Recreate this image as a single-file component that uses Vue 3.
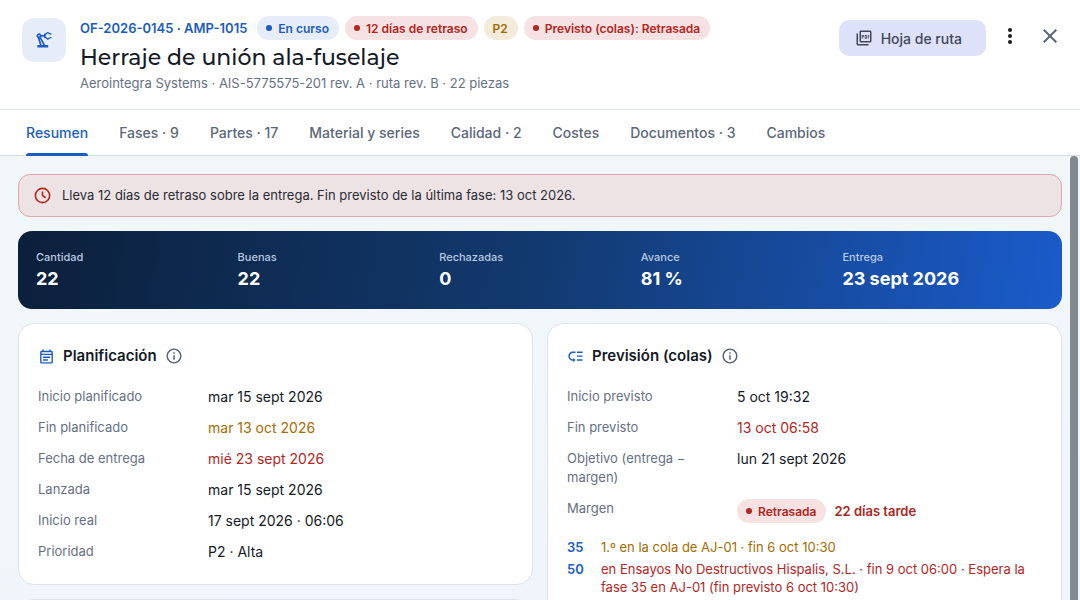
<script setup>
import { ref } from "vue";

const activeTab = ref("Resumen");

const tabs = [
  "Resumen",
  "Fases · 9",
  "Partes · 17",
  "Material y series",
  "Calidad · 2",
  "Costes",
  "Documentos · 3",
  "Cambios",
];

const chips = [
  { text: "En curso", tone: "info", dot: true },
  { text: "12 días de retraso", tone: "bad", dot: true },
  { text: "P2", tone: "warn", dot: false },
  { text: "Previsto (colas): Retrasada", tone: "bad", dot: true },
];

const stats = [
  { label: "Cantidad", value: "22" },
  { label: "Buenas", value: "22" },
  { label: "Rechazadas", value: "0" },
  { label: "Avance", value: "81 %" },
  { label: "Entrega", value: "23 sept 2026" },
];

const planning = [
  { label: "Inicio planificado", value: "mar 15 sept 2026" },
  { label: "Fin planificado", value: "mar 13 oct 2026", tone: "text-warn" },
  { label: "Fecha de entrega", value: "mié 23 sept 2026", tone: "text-bad" },
  { label: "Lanzada", value: "mar 15 sept 2026" },
  { label: "Inicio real", value: "17 sept 2026 · 06:06" },
  { label: "Prioridad", value: "P2 · Alta" },
];

const forecast = [
  { label: "Inicio previsto", value: "5 oct 19:32" },
  { label: "Fin previsto", value: "13 oct 06:58", tone: "text-bad" },
  { label: "Objetivo (entrega − margen)", value: "lun 21 sept 2026" },
];

const queue = [
  { phase: 35, text: "1.º en la cola de AJ-01 · fin 6 oct 10:30", tone: "text-warn" },
  {
    phase: 50,
    text: "en Ensayos No Destructivos Hispalis, S.L. · fin 9 oct 06:00 · Espera la fase 35 en AJ-01 (fin previsto 6 oct 10:30)",
    tone: "text-bad",
  },
];
</script>

<template>
  <div class="order">
    <header class="header">
      <div class="order-icon">
        <svg viewBox="0 0 24 24" width="20" height="20" fill="currentColor" aria-hidden="true">
          <path d="M19.93 8.35l-3.6 1.68L14 7.7V6.3l2.33-2.33 3.6 1.68c.38.18.82.01 1-.36.18-.38.01-.82-.36-1L16.65 2.46c-.38-.18-.83-.1-1.13.2l-1.74 1.74c-.18-.24-.46-.4-.78-.4-.55 0-1 .45-1 1v1H8.82C8.34 4.65 6.98 3.73 5.4 4.07c-1.16.25-2.15 1.25-2.36 2.43-.22 1.32.46 2.47 1.48 3.08L7.08 18H4v3h13v-3h-3.62L8.41 8.77c.17-.24.31-.49.41-.77H12v1c0 .55.45 1 1 1 .32 0 .6-.16.78-.38l1.74 1.74c.3.3.75.38 1.13.2l3.92-1.83c.38-.18.54-.62.36-1-.18-.37-.62-.54-1-.36zM6 8c-.55 0-1-.45-1-1s.45-1 1-1 1 .45 1 1-.45 1-1 1zm5.11 10H9.17l-2.46-8h.1l4.3 8z" />
        </svg>
      </div>
      <div class="heading">
        <div class="meta">
          <span class="code">OF-2026-0145 · AMP-1015</span>
          <span v-for="chip in chips" :key="chip.text" class="chip" :class="chip.tone">
            <span v-if="chip.dot" class="dot"></span>{{ chip.text }}
          </span>
        </div>
        <h1>Herraje de unión ala-fuselaje</h1>
        <p class="subtitle">Aerointegra Systems · AIS-5775575-201 rev. A · ruta rev. B · 22 piezas</p>
      </div>
      <div class="actions">
        <button type="button" class="route-button">
          <svg viewBox="0 0 24 24" width="18" height="18" fill="currentColor" aria-hidden="true">
            <path d="M20 2H8c-1.1 0-2 .9-2 2v12c0 1.1.9 2 2 2h12c1.1 0 2-.9 2-2V4c0-1.1-.9-2-2-2zm0 14H8V4h12v12zM4 6H2v14c0 1.1.9 2 2 2h14v-2H4V6zm12 6V9c0-.55-.45-1-1-1h-2v5h2c.55 0 1-.45 1-1zm-2-3h1v3h-1V9zm4 2h1v-1h-1V9h1V8h-2v5h1zm-8 0h1c.55 0 1-.45 1-1V9c0-.55-.45-1-1-1H9v5h1v-2zm0-2h1v1h-1V9z" />
          </svg>
          Hoja de ruta
        </button>
        <button type="button" class="icon-button dark" aria-label="Más acciones">
          <svg viewBox="0 0 24 24" width="24" height="24" fill="currentColor" aria-hidden="true">
            <circle cx="12" cy="6" r="2" />
            <circle cx="12" cy="12" r="2" />
            <circle cx="12" cy="18" r="2" />
          </svg>
        </button>
        <button type="button" class="icon-button" aria-label="Cerrar">
          <svg viewBox="0 0 24 24" width="24" height="24" fill="currentColor" aria-hidden="true">
            <path d="M19 6.41L17.59 5 12 10.59 6.41 5 5 6.41 10.59 12 5 17.59 6.41 19 12 13.41 17.59 19 19 17.59 13.41 12z" />
          </svg>
        </button>
      </div>
    </header>

    <nav class="tabs" role="tablist">
      <button
        v-for="tab in tabs"
        :key="tab"
        type="button"
        role="tab"
        class="tab"
        :class="{ active: tab === activeTab }"
        :aria-selected="tab === activeTab"
        @click="activeTab = tab"
      >
        {{ tab }}
      </button>
    </nav>

    <div class="body">
      <main class="content">
        <div class="alert" role="alert">
          <svg viewBox="0 0 24 24" width="19" height="19" fill="none" stroke="currentColor" stroke-width="2" aria-hidden="true">
            <circle cx="12" cy="12" r="9" />
            <path d="M12 7v5l4 3" />
          </svg>
          <span>Lleva 12 días de retraso sobre la entrega. Fin previsto de la última fase: 13 oct 2026.</span>
        </div>

        <section class="stats">
          <div v-for="stat in stats" :key="stat.label" class="stat">
            <span class="stat-label">{{ stat.label }}</span>
            <span class="stat-value">{{ stat.value }}</span>
          </div>
        </section>

        <div class="cards">
          <section class="card">
            <h2>
              <svg class="card-icon" viewBox="0 0 24 24" width="17" height="17" fill="currentColor" aria-hidden="true">
                <path d="M19 4h-1V2h-2v2H8V2H6v2H5c-1.1 0-2 .9-2 2v14c0 1.1.9 2 2 2h14c1.1 0 2-.9 2-2V6c0-1.1-.9-2-2-2zm0 16H5V10h14v10zm0-12H5V6h14v2zM7 12h10v2H7zm0 4h7v2H7z" />
              </svg>
              Planificación
              <svg class="info-icon" viewBox="0 0 24 24" width="18" height="18" fill="currentColor" aria-hidden="true">
                <path d="M11 7h2v2h-2zm0 4h2v6h-2zm1-9C6.48 2 2 6.48 2 12s4.48 10 10 10 10-4.48 10-10S17.52 2 12 2zm0 18c-4.41 0-8-3.59-8-8s3.59-8 8-8 8 3.59 8 8-3.59 8-8 8z" />
              </svg>
            </h2>
            <dl>
              <template v-for="row in planning" :key="row.label">
                <dt>{{ row.label }}</dt>
                <dd :class="row.tone">{{ row.value }}</dd>
              </template>
            </dl>
          </section>

          <section class="card tall">
            <h2>
              <svg class="card-icon" viewBox="0 0 24 24" width="17" height="17" fill="currentColor" aria-hidden="true">
                <path d="M14 5h8v2h-8zm0 5.5h8v2h-8zm0 5.5h8v2h-8zM2 11.5C2 15.08 4.92 18 8.5 18H9v2l3-3-3-3v2h-.5C6.02 16 4 13.98 4 11.5S6.02 7 8.5 7H12V5H8.5C4.92 5 2 7.92 2 11.5z" />
              </svg>
              Previsión (colas)
              <svg class="info-icon" viewBox="0 0 24 24" width="18" height="18" fill="currentColor" aria-hidden="true">
                <path d="M11 7h2v2h-2zm0 4h2v6h-2zm1-9C6.48 2 2 6.48 2 12s4.48 10 10 10 10-4.48 10-10S17.52 2 12 2zm0 18c-4.41 0-8-3.59-8-8s3.59-8 8-8 8 3.59 8 8-3.59 8-8 8z" />
              </svg>
            </h2>
            <dl>
              <template v-for="row in forecast" :key="row.label">
                <dt>{{ row.label }}</dt>
                <dd :class="row.tone">{{ row.value }}</dd>
              </template>
              <dt>Margen</dt>
              <dd class="margin-value">
                <span class="chip bad"><span class="dot"></span>Retrasada</span>
                <strong>22 días tarde</strong>
              </dd>
            </dl>
            <ul class="queue">
              <li v-for="item in queue" :key="item.phase">
                <a href="#" class="phase">{{ item.phase }}</a>
                <span :class="item.tone">{{ item.text }}</span>
              </li>
            </ul>
          </section>

          <section class="card"></section>
        </div>
      </main>
      <div class="scroll-thumb"></div>
    </div>
  </div>
</template>

<style>
body {
  margin: 0;
  overflow: hidden;
}
</style>

<style scoped>
.order {
  display: flex;
  flex-direction: column;
  height: 100vh;
  overflow: hidden;
  background: #fff;
  color: #131a26;
  font-family: Inter, "Liberation Sans", sans-serif;
  font-size: 14px;
}

h1, h2, p, dl, dd, ul {
  margin: 0;
  padding: 0;
}

button {
  border: none;
  background: none;
  font: inherit;
  cursor: pointer;
}

.header {
  display: flex;
  align-items: flex-start;
  gap: 14px;
  padding: 16px 12px 16px 22px;
  border-bottom: 1px solid #dde3e8;
}

.order-icon {
  display: flex;
  align-items: center;
  justify-content: center;
  width: 44px;
  height: 44px;
  margin-top: 2px;
  border-radius: 12px;
  background: #e6ecf8;
  color: #1c5cc0;
}

.heading {
  flex: 1;
}

.meta {
  display: flex;
  align-items: center;
  gap: 6px;
}

.code {
  margin-right: 4px;
  color: #1c5cc0;
  font-size: 13px;
  font-weight: 600;
}

.chip {
  display: inline-flex;
  align-items: center;
  gap: 6px;
  height: 24px;
  padding: 0 10px 0 9px;
  border-radius: 12px;
  font-size: 12px;
  font-weight: 600;
  white-space: nowrap;
}

.dot {
  width: 6px;
  height: 6px;
  border-radius: 50%;
  background: currentColor;
}

.info {
  background: #e6ecf8;
  color: #1c5cc0;
}

.bad {
  background: #f6e2e2;
  color: #b3261e;
}

.warn {
  background: #f3ebdc;
  color: #a66b00;
}

h1 {
  font-family: Montserrat, Inter, sans-serif;
  font-size: 22px;
  font-weight: 500;
  line-height: 32px;
  margin-top: 2px;
}

.subtitle {
  color: #667085;
  font-size: 13px;
  line-height: 19px;
}

.actions {
  display: flex;
  align-items: flex-start;
  gap: 4px;
  padding-top: 2px;
}

.route-button {
  display: flex;
  align-items: center;
  gap: 8px;
  height: 36px;
  margin-top: 2px;
  margin-right: 2px;
  padding: 0 24px 0 16px;
  border-radius: 10px;
  background: #dde2f9;
  color: #414659;
  font-weight: 500;
}

.icon-button {
  display: flex;
  align-items: center;
  justify-content: center;
  width: 36px;
  height: 36px;
  padding: 0;
  color: #5b6779;
}

.icon-button.dark {
  color: #1a1b1f;
}

.tabs {
  display: flex;
  gap: 31px;
  padding: 0 26px;
  border-bottom: 1px solid #d5dde4;
}

.tab {
  position: relative;
  height: 45px;
  padding: 0;
  color: #5b6779;
  font-weight: 500;
}

.tab.active {
  color: #1c5cc0;
}

.tab.active::after {
  content: "";
  position: absolute;
  right: 0;
  bottom: -1px;
  left: 0;
  height: 3px;
  border-radius: 3px 3px 0 0;
  background: #1c5cc0;
}

.body {
  position: relative;
  flex: 1;
  min-height: 0;
  overflow: hidden;
  background: linear-gradient(170deg, #f1f6f9 40%, #f0f5fd);
}

.content {
  display: flex;
  flex-direction: column;
  gap: 14px;
  padding: 18px;
}

.scroll-thumb {
  position: absolute;
  top: 0;
  right: 2px;
  bottom: -8px;
  width: 8px;
  border-radius: 4px;
  background: #838991;
}

.alert {
  display: flex;
  align-items: center;
  gap: 10px;
  padding: 11px 14px;
  border: 1px solid #dba8ab;
  border-radius: 12px;
  background: #ede3e5;
  color: #2a2c33;
  font-size: 13px;
  line-height: 19px;
}

.alert svg {
  color: #b3261e;
}

.stats {
  display: grid;
  grid-template-columns: repeat(5, 1fr);
  padding: 18px;
  border-radius: 14px;
  background: linear-gradient(100deg, #0b1f3a, #123a70 50%, #1a5bcb);
  color: #fff;
}

.stat {
  display: flex;
  flex-direction: column;
  gap: 2px;
}

.stat-label {
  color: #b9c9e0;
  font-size: 11px;
  font-weight: 500;
  line-height: 16px;
}

.stat-value {
  font-size: 18px;
  font-weight: 700;
  line-height: 24px;
}

.cards {
  display: grid;
  grid-template-columns: repeat(2, 1fr);
  grid-template-rows: auto 1fr;
  gap: 14px;
}

.card {
  min-height: 60px;
  padding: 20px 19px 17px;
  border: 1px solid #dde3ea;
  border-radius: 16px;
  background: #fff;
}

.card.tall {
  grid-row: span 2;
}

h2 {
  display: flex;
  align-items: center;
  gap: 8px;
  margin-bottom: 13px;
  font-size: 15px;
  font-weight: 600;
  line-height: 24px;
}

.card-icon {
  color: #1c5cc0;
}

.info-icon {
  color: #5b6779;
}

dl {
  display: grid;
  grid-template-columns: 160px 1fr;
  column-gap: 10px;
}

dt {
  padding: 6px 0;
  color: #667085;
  font-size: 13px;
  line-height: 19px;
}

dd {
  padding: 6px 0;
  line-height: 19px;
}

.text-warn {
  color: #a66b00;
}

.text-bad {
  color: #b3261e;
}

.margin-value {
  display: flex;
  align-items: center;
  gap: 8px;
}

.margin-value strong {
  color: #a8281e;
  font-size: 13px;
  font-weight: 600;
}

.queue {
  margin-top: 9px;
  list-style: none;
  font-size: 13px;
  line-height: 18px;
}

.queue li {
  display: flex;
  gap: 10px;
  margin-bottom: 4px;
}

.phase {
  flex: none;
  width: 24px;
  color: #1c5cc0;
  font-weight: 600;
  text-decoration: none;
}
</style>
